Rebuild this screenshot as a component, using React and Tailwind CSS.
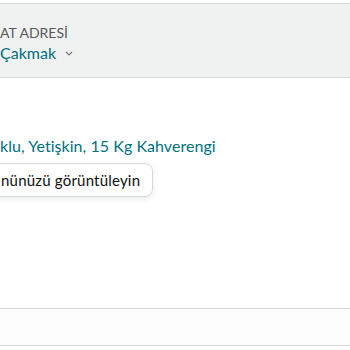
import React from 'react';

const App = () => {
  return (
    <div className="w-[350px] h-[350px] overflow-hidden bg-white font-['Lato',sans-serif]">
      <div className="mt-[3px] h-[75px] border-y border-[#d5d9d9] bg-[#f0f2f2] pt-[20px]">
        <div className="text-[14px] leading-[18px] text-[#565959]">AT ADRESİ</div>
        <div className="flex items-center gap-[9px] text-[16px] leading-[22px] text-[#00707f]">
          <span>Çakmak</span>
          <svg width="8" height="5" viewBox="0 0 8 5" className="mt-[1px]">
            <path d="M1 1l3 3 3-3" fill="none" stroke="#6b7a7a" strokeWidth="1.1" />
          </svg>
        </div>
      </div>
      <div className="pt-[57px]">
        <div className="text-[16px] leading-[21px] tracking-[0.05px] text-[#00707f]">klu, Yetişkin, 15 Kg Kahverengi</div>
        <div className="mt-[7px] -ml-[10px] w-[163px] h-[34px] flex items-center pl-[10px] rounded-[8px] border border-[#d5d9d9] shadow-[0_2px_5px_rgba(213,217,217,0.5)] text-[15px] tracking-[0.2px] text-[#0f1111]">
          nünüzü görüntüleyin
        </div>
      </div>
      <div className="mt-[111px] h-[38px] border-y border-[#d5d9d9] bg-[#fcfcfc]" />
    </div>
  );
};

export default App;
